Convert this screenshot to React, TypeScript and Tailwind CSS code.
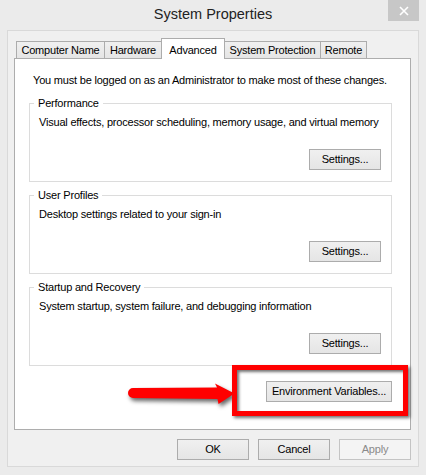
import type { ReactNode } from 'react'

const tabs = [
  { label: 'Computer Name', width: 'w-[89px]', active: false },
  { label: 'Hardware', width: 'w-[58px]', active: false },
  { label: 'Advanced', width: 'w-[64px]', active: true },
  { label: 'System Protection', width: 'w-[97px]', active: false },
  { label: 'Remote', width: 'w-[47px]', active: false },
]

const groups = [
  {
    title: 'Performance',
    text: 'Visual effects, processor scheduling, memory usage, and virtual memory',
  },
  { title: 'User Profiles', text: 'Desktop settings related to your sign-in' },
  {
    title: 'Startup and Recovery',
    text: 'System startup, system failure, and debugging information',
  },
]

function WinButton({
  children,
  wide,
  disabled,
}: {
  children: ReactNode
  wide?: boolean
  disabled?: boolean
}) {
  return (
    <button
      className={`h-[21px] ${wide ? 'w-[126px]' : 'w-[72px]'} border ${
        disabled
          ? 'border-[#c4c4c4] bg-[#f4f4f4] text-[#8a8a8a]'
          : 'border-[#acacac] bg-linear-to-b from-[#f0f0f0] to-[#e5e5e5] text-black'
      } text-[11px] tracking-[-0.2px] leading-none`}
    >
      {children}
    </button>
  )
}

function GroupBox({ title, text }: { title: string; text: string }) {
  return (
    <fieldset className="w-[363px] border border-[#dcdcdc] pl-[9px] pr-[9px] pt-[4px] pb-[11px]">
      <legend className="ml-[-5px] px-[4px] text-[11px] tracking-[-0.2px] leading-[15px]">{title}</legend>
      <p className="text-[11px] tracking-[-0.2px] leading-[15px]">{text}</p>
      <div className="mt-[19px] flex justify-end pr-[1px]">
        <WinButton>Settings...</WinButton>
      </div>
    </fieldset>
  )
}

function Arrow() {
  return (
    <svg
      width="120"
      height="36"
      viewBox="0 0 120 36"
      className="absolute left-[106px] top-[317px] drop-shadow-[2px_3px_2px_rgba(0,0,0,0.6)]"
    >
      <path
        d="M12 12 L96 11.5 L94 7.5 L113.5 17.5 L97.5 28 L96.5 23 L12 22 A5 5 0 0 1 12 12 Z"
        fill="#ff0000"
      />
    </svg>
  )
}

export default function App() {
  return (
    <div className="w-[426px] h-[475px] bg-[#ebebeb] flex flex-col font-['Liberation_Sans',Arial,sans-serif] text-black">
      {/* title bar */}
      <div className="relative h-[30px] flex items-center justify-center">
        <span className="text-[14.5px] text-[#222222]">System Properties</span>
        <div className="absolute right-[7px] top-0 w-[31px] h-[21px] bg-[#c7c7c7] flex items-center justify-center">
          <svg width="10" height="10" viewBox="0 0 10 10">
            <path d="M1 1 L9 9 M9 1 L1 9" stroke="#ffffff" strokeWidth="1.6" />
          </svg>
        </div>
      </div>

      {/* client area */}
      <div className="mx-[7px] h-[437px] border border-[#d9d9d9] bg-[#f0f0f0] pt-[7px] pl-[6px] pr-[7px]">
        <div className="relative z-10 ml-[2px] flex h-[20px] items-end">
          {tabs.map((tab, i) => (
            <div
              key={tab.label}
              className={`${tab.width} ${i === 0 ? '' : '-ml-px'} flex justify-center border border-b-0 border-[#acacac] text-[11px] tracking-[-0.2px] ${
                tab.active
                  ? 'relative z-10 h-[21px] -mb-px bg-white items-start pt-[3px]'
                  : 'h-[17px] bg-linear-to-b from-[#f0f0f0] to-[#e5e5e5] items-center'
              }`}
            >
              {tab.label}
            </div>
          ))}
        </div>

        <div className="relative w-[397px] h-[372px] border border-[#adadad] bg-white pt-[14px]">
          <p className="pl-[18px] text-[11px] tracking-[-0.2px] leading-[15px]">
            You must be logged on as an Administrator to make most of these changes.
          </p>
          <div className="mt-[8px] ml-[14px] flex flex-col gap-[6px]">
            {groups.map((g) => (
              <GroupBox key={g.title} title={g.title} text={g.text} />
            ))}
          </div>
          <div className="mt-[15px] ml-[14px] w-[363px] flex justify-end">
            <WinButton wide>Environment Variables...</WinButton>
          </div>

          {/* annotation */}
          <Arrow />
          <div className="absolute left-[217px] top-[306px] w-[176px] h-[51px] border-[5px] border-[#ff0000] shadow-[2px_2px_3px_rgba(0,0,0,0.55),inset_2px_2px_3px_rgba(0,0,0,0.55)]" />
        </div>

        <div className="mt-[9px] w-[397px] flex justify-end gap-[9px]">
          <WinButton>OK</WinButton>
          <WinButton>Cancel</WinButton>
          <WinButton disabled>Apply</WinButton>
        </div>
      </div>
    </div>
  )
}
